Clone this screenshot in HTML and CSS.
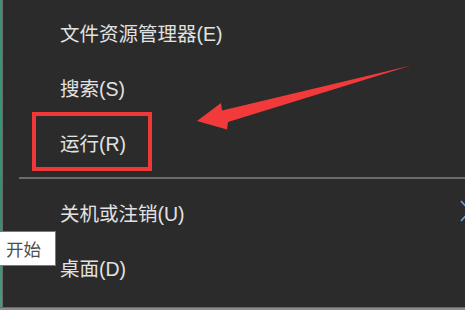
FILE: index.html
```html
<!DOCTYPE html>
<html lang="zh-CN">
<head>
<meta charset="utf-8">
<title>Start menu</title>
<link rel="stylesheet" href="styles.css">
</head>
<body>
<div class="screen">
  <div class="edge"></div>
  <div class="menu">
    <ul class="items">
      <li class="item">文件资源管理器(E)</li>
      <li class="item">搜索(S)</li>
      <li class="item">运行(R)</li>
      <li class="sep"></li>
      <li class="item">关机或注销(U)</li>
      <li class="item">桌面(D)</li>
    </ul>
  </div>
</div>
<div class="highlight"></div>
<svg class="arrow" width="465" height="310" viewBox="0 0 465 310">
  <polygon points="197,121 221,103 222,110.5 411,65.5 228,122 227,129.5" fill="#f23a3a"/>
</svg>
<svg class="chevron" width="10" height="24" viewBox="0 0 10 24">
  <polyline points="1,2 10,12 1,22" fill="none" stroke="#6f9fe0" stroke-width="1.6"/>
</svg>
<div class="tooltip">开始</div>
</body>
</html>
```
FILE: styles.css
```css
html, body {
  margin: 0;
  padding: 0;
  width: 465px;
  height: 310px;
  overflow: hidden;
  background: #8c8c8c;
  font-family: "Liberation Sans", "Noto Sans CJK SC", sans-serif;
}

.screen {
  display: flex;
  width: 465px;
  height: 308px;
  border-bottom: 1px solid #6a6a6a;
  box-sizing: border-box;
  background: #2b2b2b;
}

.edge {
  width: 2px;
  background: linear-gradient(#3f8f78, #2f9a70 40%, #3a8a74 70%, #4a9a80);
  border-right: 1px solid #6a6a6a;
  flex: none;
}

.menu {
  flex: 1;
  background: #2b2b2b;
}

.items {
  list-style: none;
  margin: 0;
  padding: 5px 0 0 0;
}

.item {
  height: 55px;
  display: flex;
  align-items: center;
  padding-left: 57px;
  color: #e2e2e2;
  font-size: 19.5px;
}

.sep {
  height: 2px;
  margin: 7px 0 6px 16px;
  background: #6c6c6c;
}

.highlight {
  position: absolute;
  left: 32px;
  top: 112px;
  width: 112px;
  height: 51px;
  border: 4px solid #f03838;
}

.arrow {
  position: absolute;
  left: 0;
  top: 0;
}

.chevron {
  position: absolute;
  left: 460px;
  top: 199px;
}

.tooltip {
  position: absolute;
  left: 0;
  top: 231px;
  width: 56px;
  height: 35px;
  box-sizing: border-box;
  background: #ffffff;
  border: 1px solid #7a7a7a;
  border-left: none;
  color: #4e4e4e;
  font-family: "Noto Sans CJK SC", sans-serif;
  font-size: 17.5px;
  display: flex;
  align-items: center;
  padding-left: 6px;
}
```
